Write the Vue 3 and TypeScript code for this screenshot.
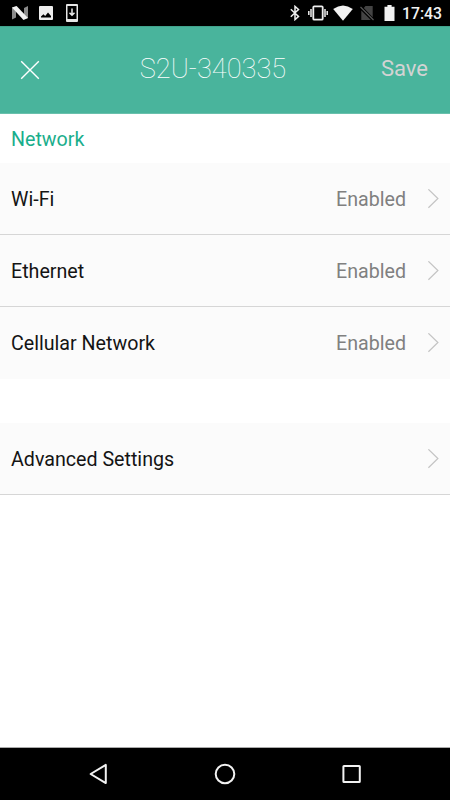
<script setup lang="ts">
interface SettingRow {
  label: string
  value?: string
}

const deviceName = 'S2U-340335'
const networkRows: SettingRow[] = [
  { label: 'Wi-Fi', value: 'Enabled' },
  { label: 'Ethernet', value: 'Enabled' },
  { label: 'Cellular Network', value: 'Enabled' },
]
const otherRows: SettingRow[] = [{ label: 'Advanced Settings' }]
</script>

<template>
  <div class="screen">
    <div class="status-bar">
      <div class="status-left">
        <svg width="16" height="18" viewBox="0 0 16 18">
          <path d="M0 3.5 4 2.5V13.5L0 15.5ZM12 4 16 2V14L12 15Z" fill="#8b8b8b" />
          <path d="M0 3.5 4.6 2 16 14 11.5 16Z" fill="#f2f2f2" />
        </svg>
        <svg width="14" height="18" viewBox="0 0 14 18">
          <path fill-rule="evenodd" d="M1 2H13Q14 2 14 3V15Q14 16 13 16H1Q0 16 0 15V3Q0 2 1 2ZM2 13.6H12V12L9 8.5 6.2 12 4.4 10.2 2 12.5Z" fill="#eee" />
        </svg>
        <svg width="12" height="18" viewBox="0 0 12 18">
          <path fill-rule="evenodd" d="M1 0H11Q12 0 12 1V17Q12 18 11 18H1Q0 18 0 17V1Q0 0 1 0ZM1.5 2V15H10.5V2Z" fill="#e6e6e6" />
          <path d="M6 4.5V11M3.5 8.8 6 11.3 8.5 8.8" fill="none" stroke="#eee" stroke-width="1.5" />
        </svg>
      </div>
      <div class="status-right">
        <svg width="10" height="16" viewBox="0 0 10 16">
          <path d="M.8 4.2 8.5 11.5 5 14.6V1.4L8.5 4.5.8 11.8" fill="none" stroke="#eee" stroke-width="1.5" />
        </svg>
        <svg class="vibrate" width="20" height="16" viewBox="0 0 20 16">
          <rect x="5.3" y="1.3" width="9.4" height="13.4" rx="1" fill="none" stroke="#eee" stroke-width="1.8" />
          <path d="M3 4V12M17 4V12M.8 6V10M19.2 6V10" stroke="#eee" stroke-width="1.5" />
        </svg>
        <svg class="wifi" width="20" height="16" viewBox="0 0 20 16">
          <path d="M.2 4Q10-3 19.8 4L10 15.8Z" fill="#f2f2f2" />
        </svg>
        <svg class="sim" width="14" height="16" viewBox="0 0 14 16">
          <path d="M5.5 1H12.7V12.2L3.8 3ZM1.3 5.5 10.8 15H1.3Z" fill="#444" />
          <path d="M.5 2 13.5 15" stroke="#555" stroke-width="1.2" />
        </svg>
        <svg class="battery" width="11" height="16" viewBox="0 0 11 16">
          <path d="M3.4 0H7.6V1.7H10.5V16H.5V1.7H3.4Z" fill="#f2f2f2" />
        </svg>
        <span class="clock">17:43</span>
      </div>
    </div>

    <header class="app-bar">
      <button class="close" aria-label="Close">
        <svg width="20" height="20" viewBox="0 0 20 20">
          <path d="M1.2 1.2 18.8 18.8M18.8 1.2 1.2 18.8" stroke="#fff" stroke-width="1.4" />
        </svg>
      </button>
      <h1>{{ deviceName }}</h1>
      <button class="save">Save</button>
    </header>

    <main>
      <h2>Network</h2>
      <ul class="group">
        <li v-for="row in networkRows" :key="row.label" class="row">
          <span class="label">{{ row.label }}</span>
          <span class="value">{{ row.value }}</span>
          <svg class="chevron" width="12" height="20" viewBox="0 0 12 20">
            <path d="M1.4 .3 10.9 9.5 1.4 18.7" fill="none" stroke="#c4c4c4" stroke-width="1.2" />
          </svg>
        </li>
      </ul>
      <ul class="group other">
        <li v-for="row in otherRows" :key="row.label" class="row">
          <span class="label">{{ row.label }}</span>
          <svg class="chevron" width="12" height="20" viewBox="0 0 12 20">
            <path d="M1.4 .3 10.9 9.5 1.4 18.7" fill="none" stroke="#c4c4c4" stroke-width="1.2" />
          </svg>
        </li>
      </ul>
    </main>

    <nav class="nav-bar">
      <svg width="22" height="22" viewBox="0 0 22 22">
        <path d="M18.8 1.9V20.1L3.6 11Z" fill="none" stroke="#f2f2f2" stroke-width="2" stroke-linejoin="round" />
      </svg>
      <svg width="22" height="22" viewBox="0 0 22 22">
        <circle cx="11" cy="11" r="9.3" fill="none" stroke="#f2f2f2" stroke-width="2" />
      </svg>
      <svg width="22" height="22" viewBox="0 0 22 22">
        <rect x="2.4" y="3" width="16.4" height="16" rx=".6" fill="none" stroke="#f2f2f2" stroke-width="2" />
      </svg>
    </nav>
  </div>
</template>

<style>
body {
  margin: 0;
  background: #fff;
}
</style>

<style scoped>
.screen {
  width: 450px;
  height: 800px;
  display: flex;
  flex-direction: column;
  overflow: hidden;
  background: #fff;
  color: #141414;
  font-family: Roboto, sans-serif;
}
svg {
  display: block;
  flex: none;
}
.status-bar {
  height: 26px;
  display: flex;
  justify-content: space-between;
  align-items: center;
  padding: 0 9px 0 12px;
  box-sizing: border-box;
  background: #000;
}
.status-left,
.status-right {
  display: flex;
  align-items: center;
}
.status-left {
  gap: 13px;
  padding-bottom: 1px;
}
.status-left svg:first-child {
  margin-right: -2px;
}
.vibrate { margin-left: 8px; }
.wifi { margin-left: 5px; }
.sim { margin-left: 7px; }
.battery { margin-left: 10px; }
.clock {
  width: 39px;
  margin-left: 7px;
  color: #f2f2f2;
  font-size: 15.8px;
  font-weight: 500;
  line-height: 26px;
  padding-top: 1px;
}
.app-bar {
  height: 88px;
  display: grid;
  grid-template-columns: 90px 1fr 90px;
  align-items: center;
  box-sizing: border-box;
  padding-bottom: 2px;
  border-top: 1px solid #42a38c;
  border-bottom: 1px solid #69c0ac;
  background: #49b49c;
}
button {
  border: 0;
  padding: 0;
  background: none;
  font: inherit;
}
.close {
  padding: 1px 0 0 20px;
}
h1 {
  margin: 0;
  padding-right: 24px;
  text-align: center;
  color: #fff;
  font-size: 27.2px;
  font-weight: 100;
  line-height: 36px;
}
.save {
  padding-right: 22px;
  text-align: right;
  color: #d3d3d3;
  font-size: 22px;
  line-height: 32px;
}
main {
  flex: 1;
}
h2 {
  height: 49px;
  margin: 0;
  padding-left: 11px;
  color: #1aae8c;
  font-size: 19.65px;
  font-weight: 400;
  line-height: 52px;
}
.group {
  margin: 0;
  padding: 0;
  list-style: none;
}
.row {
  height: 72px;
  display: flex;
  align-items: center;
  box-sizing: border-box;
  padding: 0 11px;
  border-bottom: 1px solid #d6d6d6;
  background: #fbfbfb;
  font-size: 19.65px;
  line-height: 24px;
}
.group:not(.other) .row:last-child {
  border-bottom-color: transparent;
}
.label,
.value {
  padding-top: 2px;
}
.label {
  flex: 1;
}
.value {
  margin-right: 21px;
  color: #808080;
}
.other {
  margin-top: 44px;
}
.nav-bar {
  height: 53px;
  display: flex;
  justify-content: space-between;
  align-items: center;
  box-sizing: border-box;
  padding: 0 87px;
  border-top: 1px solid #aaa;
  background: #000;
}
</style>
